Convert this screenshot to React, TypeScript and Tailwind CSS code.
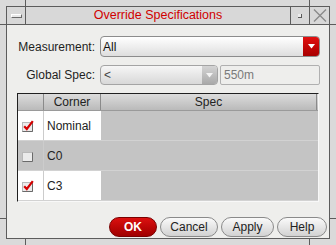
import React from 'react'

const rows = [
  { name: 'Nominal', checked: true, white: true },
  { name: 'C0', checked: false, white: false },
  { name: 'C3', checked: true, white: true },
]

function Check({ on }: { on: boolean }) {
  return (
    <svg width="13" height="13" viewBox="0 0 13 13">
      <rect x="0.5" y="3.5" width="10" height="9" fill="#ebebeb" stroke="#b8b8b8" />
      <path d="M0.5 12.5 H10.5 V3.5" fill="none" stroke="#6a6a6a" />
      {on && <path d="M2.2 7.2 L4.8 10 L10.8 2.2" fill="none" stroke="#d40000" strokeWidth="2.2" />}
    </svg>
  )
}

function Arrow({ color = '#fff' }: { color?: string }) {
  return (
    <svg width="7" height="5" viewBox="0 0 7 5">
      <path d="M0 0 H7 L3.5 4.5 Z" fill={color} />
    </svg>
  )
}

export default function App() {
  return (
    <div className="relative h-[245px] w-[336px] bg-[#dadada] p-[6px] font-['Liberation_Sans',Arial,sans-serif] text-[12px] text-[#1e1e1e]">
      {/* frame resize notches */}
      <div className="absolute left-[25px] top-0 h-[6px] w-px bg-[#5c5c5c]" />
      <div className="absolute left-[309px] top-0 h-[6px] w-px bg-[#5c5c5c]" />
      <div className="absolute left-0 top-[24px] h-px w-[6px] bg-[#5c5c5c]" />
      <div className="absolute right-0 top-[24px] h-px w-[6px] bg-[#5c5c5c]" />
      <div className="absolute left-0 top-[218px] h-px w-[6px] bg-[#5c5c5c]" />
      <div className="absolute right-0 top-[218px] h-px w-[6px] bg-[#5c5c5c]" />
      <div className="absolute bottom-0 left-[25px] h-[6px] w-px bg-[#5c5c5c]" />
      <div className="absolute bottom-0 left-[309px] h-[6px] w-px bg-[#5c5c5c]" />

      <div className="flex h-full w-full flex-col border border-[#5c5c5c]">
        {/* title bar */}
        <div className="flex h-[18px] border-b border-[#5c5c5c] bg-[#d8d8d8]">
          <div className="flex w-[19px] items-center justify-center border-r border-[#5c5c5c]">
            <div className="h-[4px] w-[11px] border-b border-r border-[#6a6a6a] border-l border-t border-l-white border-t-white bg-[#e8e8e8]" />
          </div>
          <div className="flex flex-1 items-center justify-center text-[12.5px] leading-none text-[#d00000]">
            Override Specifications
          </div>
          <div className="flex w-[19px] items-center justify-center border-l border-[#5c5c5c]">
            <div className="h-[4px] w-[4px] border-b border-r border-[#5a5a5a] bg-[#ececec]" />
          </div>
          <div className="flex w-[20px] items-center justify-center border-l border-[#5c5c5c]">
            <svg width="14" height="13" viewBox="0 0 14 13">
              <path d="M1 0.5 L13 12.5 M13 0.5 L1 12.5" stroke="#8a8a8a" strokeWidth="1.4" fill="none" />
            </svg>
          </div>
        </div>

        {/* body */}
        <div className="flex flex-1 flex-col bg-[#eeeeec] pt-[11px]">
          <div className="flex h-[21px] items-center">
            <div className="w-[93px] pr-[5px] text-right">Measurement:</div>
            <div className="flex h-[21px] w-[220px] overflow-hidden rounded-[4px] border border-[#8c8c8c] bg-gradient-to-b from-[#ffffff] to-[#dedede]">
              <div className="flex flex-1 items-center pl-[2px] text-[#111]">All</div>
              <div className="flex w-[16px] items-center justify-center bg-gradient-to-b from-[#e21010] to-[#a80000]">
                <Arrow />
              </div>
            </div>
          </div>

          <div className="mt-[8px] flex h-[20px] items-center">
            <div className="w-[93px] pr-[5px] text-right">Global Spec:</div>
            <div className="flex h-[20px] w-[118px] overflow-hidden rounded-[4px] border border-[#a4a4a4] bg-gradient-to-b from-[#f6f6f6] to-[#d8d8d8]">
              <div className="flex flex-1 items-center pl-[3px] text-[#444]">&lt;</div>
              <div className="flex w-[15px] items-center justify-center bg-gradient-to-b from-[#d4d4d4] to-[#a9a9a9]">
                <Arrow color="#f4f4f4" />
              </div>
            </div>
            <div className="ml-[2px] flex h-[20px] w-[100px] items-center rounded-[2px] border border-[#b0b0b0] bg-[#eeeeec] pl-[3px] text-[#7a7a7a]">
              550m
            </div>
          </div>

          {/* table */}
          <div className="ml-[10px] mt-[8px] flex h-[109px] w-[302px] flex-col border-l border-t border-b border-r border-l-[#202020] border-t-[#202020] border-b-[#f8f8f8] border-r-[#f8f8f8] bg-[#c4c4c4]">
            <div className="flex h-[17px] border-b border-[#9a9a9a] bg-gradient-to-b from-[#dcdcdc] to-[#bababa] text-[#222]">
              <div className="w-[26px] border-r border-[#8a8a8a]" />
              <div className="flex w-[57px] items-center justify-center border-r border-[#8a8a8a]">Corner</div>
              <div className="flex w-[216px] items-center justify-center border-r border-[#8a8a8a]">Spec</div>
            </div>
            {rows.map((r) => (
              <div key={r.name} className="flex h-[30px] border-b border-[#d2d2d2]">
                <div className={`flex w-[26px] items-center border-r border-[#cccccc] pl-[4px] ${r.white ? 'bg-white' : ''}`}>
                  <Check on={r.checked} />
                </div>
                <div className={`flex w-[57px] items-center pl-[3px] text-[#222] ${r.white ? 'bg-white' : ''}`}>{r.name}</div>
                <div className="flex-1" />
              </div>
            ))}
          </div>

          {/* buttons */}
          <div className="mt-[15px] flex h-[20px] justify-end gap-[3px] pr-[2px]">
            <button className="h-[20px] w-[48px] rounded-full border border-[#7a0000] bg-gradient-to-b from-[#dc1010] to-[#a00000] text-[12px] font-bold text-white">
              OK
            </button>
            <button className="h-[20px] w-[58px] rounded-full border border-[#8a8a8a] bg-gradient-to-b from-[#fafafa] to-[#d2d2d2] text-[12px] text-[#222]">
              Cancel
            </button>
            <button className="h-[20px] w-[53px] rounded-full border border-[#8a8a8a] bg-gradient-to-b from-[#fafafa] to-[#d2d2d2] text-[12px] text-[#222]">
              Apply
            </button>
            <button className="h-[20px] w-[50px] rounded-full border border-[#8a8a8a] bg-gradient-to-b from-[#fafafa] to-[#d2d2d2] text-[12px] text-[#222]">
              Help
            </button>
          </div>
        </div>
      </div>
    </div>
  )
}
